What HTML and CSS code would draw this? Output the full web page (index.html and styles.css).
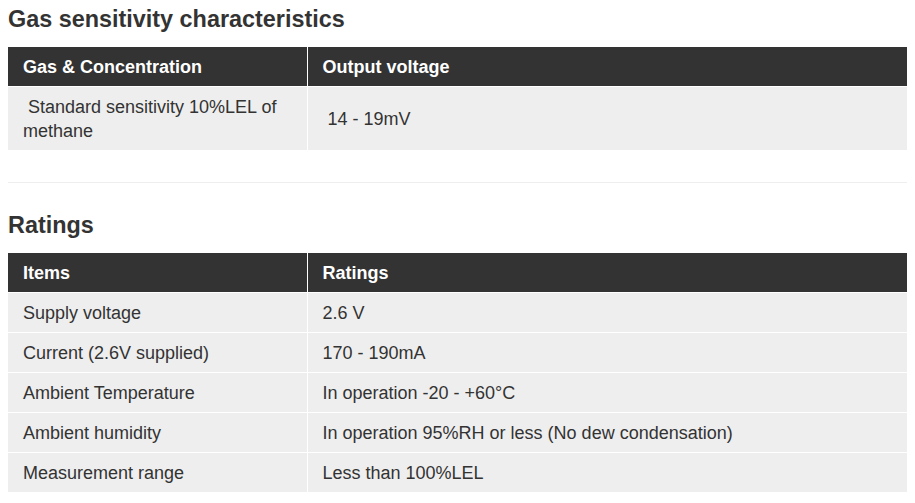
FILE: index.html
```html
<!DOCTYPE html>
<html>
<head>
<meta charset="utf-8">
<link rel="stylesheet" href="styles.css">
</head>
<body>
<div class="page">
  <h3 class="title first">Gas sensitivity characteristics</h3>
  <table class="spec">
    <colgroup><col class="c1"><col class="c2"></colgroup>
    <thead>
      <tr><th>Gas &amp; Concentration</th><th>Output voltage</th></tr>
    </thead>
    <tbody>
      <tr><td>&nbsp;Standard sensitivity 10%LEL of methane</td><td>&nbsp;14 - 19mV</td></tr>
    </tbody>
  </table>
  <hr class="sep">
  <h3 class="title">Ratings</h3>
  <table class="spec">
    <colgroup><col class="c1"><col class="c2"></colgroup>
    <thead>
      <tr><th>Items</th><th>Ratings</th></tr>
    </thead>
    <tbody>
      <tr><td>Supply voltage</td><td>2.6 V</td></tr>
      <tr><td>Current (2.6V supplied)</td><td>170 - 190mA</td></tr>
      <tr><td>Ambient Temperature</td><td>In operation -20 - +60°C</td></tr>
      <tr><td>Ambient humidity</td><td>In operation 95%RH or less (No dew condensation)</td></tr>
      <tr><td>Measurement range</td><td>Less than 100%LEL</td></tr>
    </tbody>
  </table>
</div>
</body>
</html>
```

FILE: styles.css
```css
html, body {
  margin: 0;
  padding: 0;
  background: #fff;
}
.page {
  padding: 0 8px;
  font-family: "Liberation Sans", Arial, sans-serif;
  color: #333;
}
.title {
  margin: 29px 0 15px;
  font-size: 23.4px;
  line-height: 26px;
  font-weight: bold;
  color: #333;
}
.title.first {
  margin-top: 6px;
}
.spec {
  width: 100%;
  border-collapse: collapse;
  table-layout: fixed;
  font-size: 18px;
  line-height: 24px;
}
.spec .c1 { width: 299px; }
.spec th,
.spec td {
  text-align: left;
  vertical-align: middle;
  padding: 8px 15px 7px;
  border-right: 1px solid #fff;
  border-bottom: 1px solid #fff;
}
.spec th:last-child,
.spec td:last-child {
  border-right: none;
}
.spec th {
  background: #333;
  color: #fff;
  font-weight: bold;
}
.spec td {
  background: #eee;
  color: #333;
}
.sep {
  margin: 31px 0 0;
  border: none;
  height: 1px;
  background: #eee;
}
```
